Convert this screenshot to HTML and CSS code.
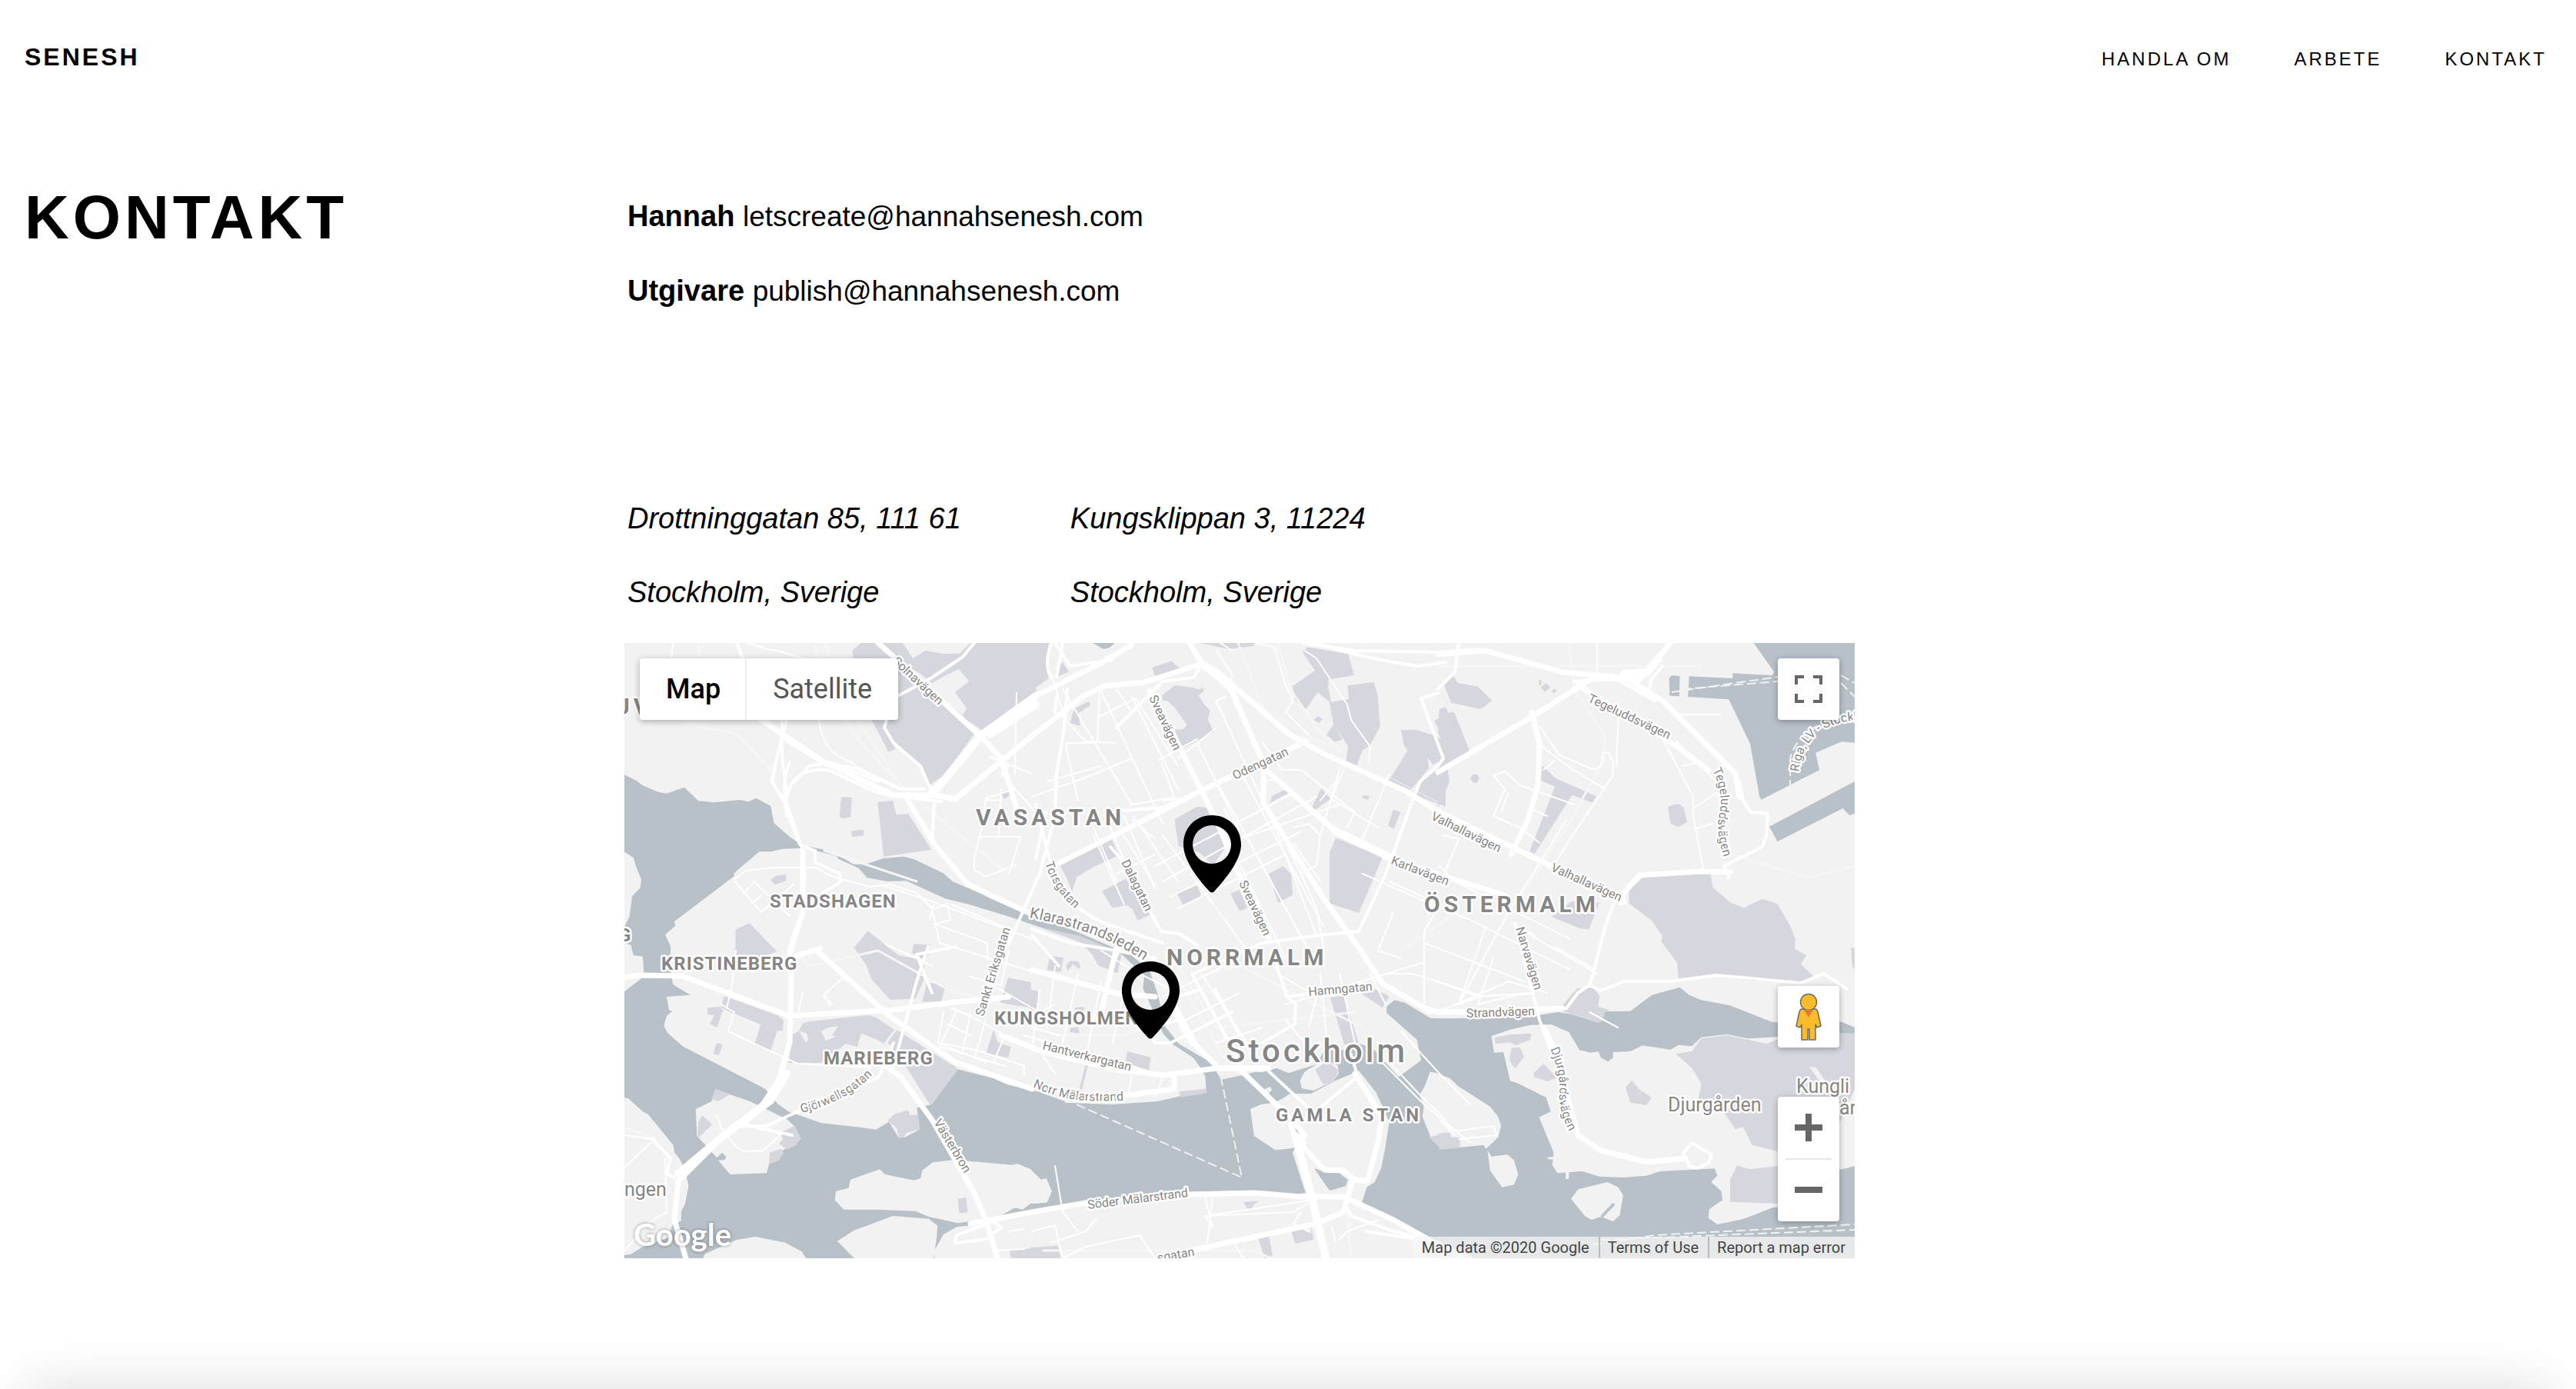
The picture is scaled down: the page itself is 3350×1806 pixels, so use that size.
FILE: index.html
```html
<!DOCTYPE html>
<html lang="sv">
<head>
<meta charset="utf-8">
<meta name="viewport" content="width=device-width, initial-scale=1">
<title>Kontakt – Senesh</title>
<link rel="stylesheet" href="styles.css">
</head>
<body>
<header class="site-header">
  <a class="brand" href="#">SENESH</a>
  <nav class="site-nav" aria-label="Huvudmeny">
    <a href="#">HANDLA OM</a>
    <a href="#">ARBETE</a>
    <a href="#">KONTAKT</a>
  </nav>
</header>

<main class="contact">
  <h1 class="contact-title">KONTAKT</h1>
  <div class="contact-body">
    <div class="emails">
      <p><strong>Hannah</strong> <a href="mailto:letscreate@hannahsenesh.com">letscreate@hannahsenesh.com</a></p>
      <p><strong>Utgivare</strong> <a href="mailto:publish@hannahsenesh.com">publish@hannahsenesh.com</a></p>
    </div>
    <div class="addresses">
      <address>Drottninggatan 85, 111 61<br>Stockholm, Sverige</address>
      <address>Kungsklippan 3, 11224<br>Stockholm, Sverige</address>
    </div>

    <section class="map" aria-label="Karta">
      <svg class="map-canvas" viewBox="0 0 1600 800" preserveAspectRatio="xMidYMid slice">
        <defs>
          <path id="p-torsgatan" d="M547 286Q558 322 588 347L610 360"/>
          <path id="p-klara" d="M526 357Q600 371 645 395T700 433"/>
          <path id="p-norr" d="M531 577Q565 593 600 595T680 592"/>
          <path id="p-gjorwell" d="M230 611Q290 597 328 556"/>
          <path id="p-djurgard" d="M1204 528Q1218 560 1216 585T1234 645"/>
          <path id="p-tegel" d="M1415 165Q1430 195 1424 222T1434 290"/>
          <path id="p-riga" d="M1527 168Q1532 128 1560 112T1640 102"/>
        </defs>
        <rect width="1600" height="800" fill="#f2f2f2"/>

        <g class="water">
          <g transform="matrix(.3444 0 0 .3333 -2 -4)">
            <path d="M0 523 50 548 75 568 135 594 165 599 232 575 285 628 345 634 442 624 475 631 503 617 558 648 571 715 630 768 660 790 690 804 770 820 820 842 870 875 915 876 985 852 1060 845 1100 856 1210 910 1245 942 1340 985 1490 1045 1560 1075 1729 1145 1879 1212 1909 1220 1989 1290 2019 1380 2049 1510 2099 1575 2239 1660 2239 1680 2189 1680 2154 1630 2079 1580 2039 1535 1999 1440 1964 1360 1969 1310 1879 1222 1729 1170 1568 1118 1460 1080 1300 1030 1220 1010 1070 940 1000 942 922 928 890 890 815 855 805 842 690 812 605 815 560 826 515 826 420 910 420 922 195 1098 198 1115 160 1150 180 1195 182 1310 80 1310 75 1235 40 1230 30 1190 0 1180 0 1130 25 1080 35 1000 65 968 70 935 50 885 40 850 0 823Z"/>
          </g>
          <g transform="matrix(.3444 0 0 .3333 -2 396)">
            <path d="M80 100H180L190 145 255 185 165 192 175 245 187 247 165 268 155 305 168 332 225 385 535 550 585 610 625 640 750 685 885 700 955 710 1005 680 1040 740 1065 740 1120 710 1110 625 1165 612 1265 475 1400 510 1450 535 1568 562 1669 600V1240H-10V185L45 140 65 125Z"/>
          </g>
          <g transform="matrix(.3444 0 0 .3333 528 396)">
            <path d="M0 565 130 605 310 612 480 600 565 580 665 565 660 500 645 480H700L720 515 790 500 850 485 875 487 930 470 975 490 1080 455 1110 400 1180 400 1240 375 1290 390 1390 505 1475 440 1460 360 1345 255V230L1375 205 1415 215 1510 275 1600 278V1240H0Z"/>
          </g>
          <g transform="matrix(.3476 0 0 .3333 1058 396)">
            <path d="M0 278 100 275 350 268 450 252 500 260 600 293 615 285 625 250 720 248 800 185 905 155 940 185 985 205 1090 225 1250 290 1310 295 1510 290 1570 316V335L1500 335 1240 350 1160 355 1080 338 985 350 950 385 900 380 870 398 765 382 720 405 655 408V430L635 445 610 430 600 405 570 410 530 400 490 330 425 300 345 302 270 320 200 345 210 410 245 408 270 520 300 530 405 585 422 640 378 662 433 800 428 850 447 880 540 873 605 893 690 897 780 890 830 873 1035 862 1045 890 1022 915 1060 950 1065 985 1015 1020 1012 1055 1045 1080 1140 1060 1190 1040 1250 1015 1400 1000 1490 960V870L1570 850V1240H0Z"/>
          </g>
          <g transform="matrix(.3476 0 0 .3333 1058 -4)">
            <path d="M1173 0 1258 125 1250 138 1103 130V150L940 142 935 222 1088 232 1168 405 1203 612 1210 623 1427 508 1413 440 1510 397 1600 405V0ZM865 150 875 138 905 142 903 220 867 218ZM1240 728 1600 530V660L1540 685 1515 657 1270 787Z"/>
          </g>
          <path d="M609 0H638L631 6 623 8Z"/>
        </g>

        <g class="land">
          <g transform="matrix(.3444 0 0 .3333 -2 396)">
            <path d="M0 585 20 588 75 640 95 650 190 770 195 800 215 825 235 870 248 930 235 1000 220 1030V1065L185 1085 175 1130 70 1170 30 1197 0 1200Z"/>
            <path d="M350 552 335 600 275 630 280 735 312 770 355 820 375 800 390 815 385 828 360 830 405 885 543 880 555 835 605 790 660 760 670 745 650 700 620 670 560 640 480 600 410 575Z"/>
            <path d="M805 950 852 938 860 905 970 865 990 885 1100 908 1125 900 1130 870 1170 838 1250 828 1470 848 1490 843 1540 865 1580 910 1600 905 1620 950 1600 995 1540 998 1510 1022 1480 1015 1420 1050 1265 1075 1155 1050 1105 1028 960 1022H835L800 985Z"/>
            <path d="M1020 1047 1155 1058 1188 1085 1185 1130 1170 1240H900L810 1145 870 1105Z"/>
            <path d="M1180 1240 1175 1185 1210 1120 1260 1090 1365 1078 1470 1045 1560 1028V1240ZM290 1240 310 1195 430 1140 500 1128 610 1150 675 1185 710 1240Z"/>
          </g>
          <g transform="matrix(.3444 0 0 .3333 528 396)">
            <path d="M-10 1032 200 1000 400 965 600 955 820 948 1000 962 1150 945 1250 1000 1370 1060 1480 1120 1660 1200 1700 1240H-10Z"/>
            <path d="M980 570H1060L1150 520 1220 490 1240 480 1305 565 1330 620 1355 680 1340 780 1325 860 1300 915 1270 935 1250 1000 1150 960 1040 960 990 800 1000 780 970 785 925 790 845 735 830 630 870 612 920 605 950 590Z"/>
            <path d="M1080 455 1035 485 1018 520 1025 550 1070 558 1145 520 1165 490 1160 460 1120 440ZM880 555 905 542 912 555 895 575Z"/>
            <path d="M-10 868 15 880 40 905 60 900 80 950 65 990 30 998H-10Z"/>
          </g>
          <g transform="matrix(.3476 0 0 .3333 1058 396)">
            <path d="M-30 485-10 488 45 510 75 540 195 620 225 660 237 695 225 740 180 785 170 770 30 785 11 785-29 735-58 660-53 620-68 575-49 540Z"/>
            <path d="M185 790 200 815 260 808 285 830 300 885 285 925 240 935 195 870 190 830ZM635 915 675 935 693 967 680 1045 655 1068 610 1050 575 1062 550 1048 498 980 525 943ZM410 818 440 815V828L410 825ZM478 870H490V903H478Z"/>
          </g>
        </g>
        <g class="water">
          <path d="M897 683 914 689 929 689 941 698 938 706 925 710 917 712ZM866 622 876 629 881 644 871 634Z"/>
          <path class="slit" d="M1287 729 1271 746"/>
        </g>

        <g class="park">
          <g transform="matrix(.3444 0 0 .3333 -2 -4)">
            <path d="M900 12H1560V200L1355 352 1325 330 1250 280 1205 235 1180 180 1120 130 1030 75 960 12Z"/>
            <path d="M867 40 900 12H960L1030 75 1200 235 1325 355 1325 370 1210 530 1160 565 1130 490 1030 410 990 340 1005 310 1040 300V150L870 75ZM940 312 990 315 985 345 1030 425 1003 437Z"/>
            <path d="M825 613 865 615 860 690 835 697 818 690ZM862 745 908 740 911 763 866 768ZM962 634 1020 627 1032 682 1078 678 1165 818 985 845ZM557 935 580 920 616 915V940L575 955ZM1430 600 1455 585 1470 600 1440 622ZM425 1130 478 1105 582 1215 500 1250 425 1250ZM925 1135 1040 1230 1140 1250 1135 1330 1105 1400 1010 1404 940 1325 920 1270 873 1200 890 1180ZM1098 1185 1160 1190 1155 1225 1140 1250 1092 1220Z"/>
          </g>
          <g transform="matrix(.3444 0 0 .3333 528 -4)">
            <path d="M0 12H80L60 110 70 150 0 200ZM120 85 145 125 95 145ZM460 108 533 82 568 115 475 153ZM498 215 545 178 610 185 640 195 650 183 655 200 635 215 655 250 678 275 670 310 692 358 575 425 545 350 580 348 590 330 545 265 520 240 498 235ZM150 325 165 268 220 240 228 255 182 285 187 335ZM640 12H850L840 25 745 35ZM1045 28 1200 55 1222 138 1125 155V185L1135 242 1203 230 1197 178 1297 165 1312 220 1320 340 1280 415 1255 430 1232 490 1192 472 1200 415 1145 330 1128 240 1085 205 1040 270 1000 235 990 180 1075 120 1027 48ZM1070 312 1085 298 1103 308 1090 325ZM1118 370 1145 330 1178 388 1148 398ZM1400 352 1455 350 1530 375 1570 400 1568 460 1520 487 1500 460 1505 500 1445 575 1425 590 1350 552 1425 432 1410 408ZM1450 605 1480 545 1568 480V650ZM1548 268 1568 262V400L1525 315 1555 300Z"/>
            <path d="M905 635 912 610 965 583 975 597ZM1060 660 1098 580 1135 620 1070 665ZM1255 605 1280 610 1275 625 1252 615ZM1350 725 1370 662 1398 672 1372 738ZM1153 772 1330 848 1240 1065 1130 1028V830ZM108 872 305 775 335 840 240 885 175 925 157 982 140 935ZM270 980 360 932 455 1070 405 1095 385 1050 365 1035 310 1045ZM545 700 630 650 665 655 680 690 740 740 730 820 690 880 640 830 560 805 548 735ZM555 990 630 958 645 1000 578 1038ZM755 990 790 975 820 1045 790 1058ZM900 912 955 882 985 915 990 995 935 1025ZM30 1120 190 1155 345 1225 330 1300 255 1270 235 1230 190 1180Z"/>
          </g>
          <g transform="matrix(.3476 0 0 .3333 1058 -4)">
            <path d="M20 170 55 138 75 168 150 182 202 237 160 270 50 245ZM5 270 30 263 40 285 60 280 108 405 118 435 60 480 35 490 43 555 0 655V430L30 440 0 360ZM378 155 388 158 386 178 378 175ZM385 185 405 168 420 185 400 203ZM425 200 437 190 445 198 432 209ZM120 540 130 525 148 525 155 540 145 558 130 555ZM390 490 440 540 592 610 578 635 502 605 362 833 343 825 438 572 385 548ZM860 650 900 638 920 655 932 710 900 730 870 718ZM425 1080 500 1020 603 1025 565 1130 530 1125ZM715 975 780 915 1020 912 1028 965 1095 1025 1145 1045 1215 1010 1270 1030 1315 1110 1337 1165 1335 1205 1378 1230 1358 1265 1402 1310 1405 1318 1375 1335 1260 1335 1100 1320 1035 1308 900 1325 895 1260 835 1175 840 1155 800 1095 715 1028Z"/>
          </g>
          <g transform="matrix(.3444 0 0 .3333 -2 396)">
            <path d="M423 0H545L580 12 550 27H425ZM383 190 585 265 607 285 603 325 583 325 557 405 497 380 520 300 415 255 370 235ZM320 235 365 230 378 245 355 312 328 298 345 265 320 260ZM342 415 355 372 377 380 362 420ZM705 288 930 263 960 275 1025 320 985 375 950 355 900 335 885 388 840 375 825 390 750 450H625L640 340 665 325 690 370 700 360 695 335 665 325 680 295ZM1148 135 1218 150 1202 210 1130 212ZM1035 322 1255 465 1265 475 1160 615 1085 490 1000 370ZM335 590 350 552 405 572 360 600ZM285 680 300 655 338 690 283 745ZM590 725 650 695 670 740 655 770 620 788 590 765 605 745ZM555 800 595 785 608 800 590 830 552 845ZM1000 675 1025 650 1078 633 1085 655 1115 650 1122 710 1070 722 1063 740 1040 738 1035 705ZM1265 980 1297 975 1302 1033 1270 1036ZM1440 165 1455 118 1540 135 1542 165 1568 170V240L1425 215ZM1400 320 1415 370 1465 388 1455 430 1372 412ZM1460 1180 1568 1172V1240H1470Z"/>
          </g>
          <g transform="matrix(.3444 0 0 .3333 528 396)">
            <path d="M75 32 125 40 115 95 62 88ZM0 165 32 175 15 245 0 240ZM135 70 150 52 180 55 190 75 165 97 140 88ZM168 235 200 232 205 245 168 245ZM150 315 180 310 185 335 150 330ZM365 405 455 428 448 478 360 450ZM185 550 210 450 218 455 195 555ZM562 562 665 550V568L565 585ZM1132 195 1185 188 1240 375 1185 378ZM1250 180 1300 162 1355 190 1330 235ZM1075 478 1120 440 1165 480 1145 520 1105 535ZM805 993 865 988 840 1005 835 1025 820 1020ZM985 1105 1060 1088 1070 1140 1000 1155ZM860 1133 900 1125 915 1200 885 1212ZM0 1170 103 1163 115 1212H0ZM1505 740 1568 722V785L1550 785Z"/>
          </g>
          <g transform="matrix(.3476 0 0 .3333 1058 396)">
            <path d="M450 245 520 160 580 155 605 190 600 230 645 245 625 250 615 285 600 293 520 265ZM212 352 265 340 350 335 345 360 290 382 270 370 215 376ZM275 392 305 388 323 425 288 472 268 440ZM358 490 395 453 445 508 408 522 360 505ZM702 545 725 518 755 555 800 585 780 615 720 605ZM890 415 950 405 985 355 1080 342 1230 375 1300 345 1570 335V530L1500 690 1270 795 1175 770 1142 700 1112 708 1075 650 975 590 985 530 950 470ZM1093 905 1120 850 1165 865 1290 850V1000L1093 992ZM1545 0 1570 5V110L1550 70ZM0 725 45 722 50 740H82V780L5 788Z"/>
          </g>
        </g>

        <g class="land">
          <path d="M362 0H450L436 14 414 14 392 10 375 20ZM418 42 435 34 448 50 430 64 445 85 440 94 415 74 395 55ZM1022 50 1040 46 1045 72 1016 77ZM256 505 265 500 278 498 270 510 275 512 262 517ZM1541 551 1550 552 1562 570 1553 568ZM583 418 592 424 588 432 576 428ZM885 764 888 758H893L893 768Z"/>
        </g>

        <g class="road faint">
          <path d="M247 0 260 60 300 120 360 185 430 245 500 300M262 0 275 60 330 140 362 190M80 105 145 118 195 170M97 0V20M798 0 832 88 870 120 930 135M850 0 866 60 900 110 930 140M1228 0 1235 60 1275 120V150L1225 240 1165 330M1420 195 1440 275 1540 305 1600 290M1060 30 1400 30M700 400 740 470 780 540M720 420 770 500 950 480M620 370 690 415 730 520M230 410 240 420 330 400 420 450 490 470M0 630 40 645M560 510 650 510 700 490M940 740 945 800M545 790H820L840 800M760 430 800 420 960 500M260 270 380 310M1082 350 1010 400"/>
        </g>
        <g class="road thin">
          <path d="M63 0 61 22M160 0 185 8 200 10 231 20M253 100Q258 140 285 150L350 188M142 308 158 296 193 292 250 292 262 300 275 305 320 317 345 314 380 325 400 345 410 390 540 430M168 310 215 355M142 308 178 350 220 314M335 315 400 336 530 385M155 325 166 314M166 338 178 328M405 345 420 338 424 360 402 366M405 366 472 390V412M402 340 398 358M425 340 500 372M475 148 530 170M500 160 490 170 535 220M508 190 470 202 465 240 455 280V295L470 304 510 288M460 252H515L500 300M470 204 490 205M490 190 487 250M510 65 508 170M555 38 573 100 600 128 640 130M546 105 570 95M570 60 660 210 690 205M618 65 615 130H575V140L590 205M615 97 665 72 720 160M660 70 720 190M700 250 810 400M620 63 700 235M640 60 660 90M660 230 690 255M695 152 745 125M745 130 800 245M770 110 720 150M768 76 782 70M770 76 850 250 900 380M698 155 715 200 690 205M530 200 600 175 660 150M550 180 620 160M740 200 700 205M640 235 690 315M662 225 720 310M610 240 640 310"/>
          <path d="M750 185 860 410M770 180 890 400M800 165 910 370M650 225 690 320M630 235 670 330M610 250 650 340M690 290 870 195M700 310 900 200M710 330 880 245M720 345 860 275M640 300 690 275M780 215 800 255 930 210M860 260 880 300 900 345 910 400M870 260 905 310M850 175 835 180M830 130 855 165 880 165 950 220 940 240M930 165 905 250M870 240 890 235 905 250 900 290 880 300M920 203 980 240M905 205 925 180M935 165 915 215M995 170 960 255M885 10 900 20 940 80 945 100 970 135 968 155M845 5 860 55 870 75 860 90 890 120M820 0 845 5M775 0 790 10M770 10 790 40 788 60M960 300 1050 340 1100 360 1230 425M995 310 1060 340 1040 375M1060 290 1080 310M1050 340 1045 355M1000 350 980 400 1010 410M1040 375 1040 470M1120 370 1085 470 1110 460M1085 470 1150 350 1225 230M1058 440 1110 460 1180 455M1040 390 1170 440M1080 310 1230 385M1210 395 1262 425M1185 380 1160 370"/>
          <path d="M1190 108 1215 145 1260 165 1270 160 1273 142 1280 143 1286 155 1285 173 1230 255 1208 290M1191 132 1200 140 1230 162 1275 190M1210 153 1195 165M1130 172 1145 167 1165 185 1235 210M1130 172 1145 190 1130 225 1165 240 1190 260M1150 195 1140 220M1178 215 1200 225M1352 128 1390 200 1390 225 1403 295M1376 160 1395 155M1390 215 1420 195M1392 242 1415 235M1265 0V35M1293 95 1290 160M1365 93H1425M1368 128 1395 155 1420 180M1065 250 1085 255 1062 310M990 430H1025L1115 459 1184 456"/>
          <path d="M133 475 140 445 145 400M126 470 143 480 135 505 225 547 320 552M258 460 270 468M288 432 260 457 268 472M232 455 226 480M340 392 380 410 400 420M480 420 470 440 540 480 560 470M450 434 490 445 500 400M415 480 408 520 470 545M425 475 450 485 495 510 480 545M420 495 450 510M432 478 410 525 495 550M450 482 440 530M470 490 455 540M410 520 460 530 520 550V562M540 450 530 530 700 565M560 420 550 500M590 430 570 520M620 440 600 540M650 450 635 520M545 480 700 490M520 510 620 540 690 560M530 500 565 510M540 530 560 560M660 560 655 590M700 565 690 590M730 490 800 455M750 430 810 520M700 460 780 420M770 520 830 500M850 430 900 460 890 500M860 490 885 520M905 430 915 530M930 430 950 520M990 470 970 430M1010 505 1060 560 1100 600M985 545 1040 600 1100 650M860 470 1040 415M1130 410 1110 470 1170 455M1170 375 1265 430M620 400 660 425 710 450"/>
          <path d="M0 640 36 645 50 660M0 682 34 650M0 790 34 752 55 740 53 670M128 632 145 655 155 661 180 660 203 640 185 630M120 615 128 635M560 680 570 740 590 765M755 720 765 760 755 745 890 725M755 745 870 740 890 728M555 780 600 765 614 748M530 765 560 757 570 800M570 800 600 785 670 770 690 800M765 723 758 780M790 775 805 800M980 750 940 765 930 775M920 760 925 778M880 740 870 755 890 765M1060 620 1080 635 1130 628 1135 640 1085 645M1080 640 1060 620M500 765 520 762M482 790 520 788"/>
          <path d="M1255 480 1292 500M1058 480 1150 440 1200 455"/>
        </g>
        <g class="road mid">
          <path d="M146 0 158 30 190 108 215 130 262 158 300 162 360 190 390 190M211 100 198 150 192 180 213 215 232 270 234 300 232 350 215 410M205 100V150L212 200M215 155Q205 175 210 215L228 262 248 270 248 285 280 300 282 310 258 325M211 225Q205 160 265 165L330 195 395 204 412 206M222 180 240 160 270 155 330 180M455 0 440 18 400 45 350 72 338 110 350 130 385 160 398 190M403 205 400 260M560 0 580 30 620 24 635 22M640 110 700 50 740 45 750 30M576 60 572 110 562 170 560 225 540 300M555 0Q545 30 555 45M570 0 562 45M548 220 535 280M565 420 530 380M560 90 562 70M535 210 555 290Q575 350 640 370L700 390M632 265 645 280 698 375 722 378 745 393M660 390 645 395 630 430M555 290 655 241M648 218 700 214 748 193M900 0Q960 20 1033 30L1068 25M882 0 950 10 1060 12 1110 8M1058 60 1080 38 1085 0M1058 65 1036 72 1065 150 1058 160 1035 180 1025 205 990 300 955 375 905 380 830 390 740 430M1235 50 1290 47 1340 75M1350 30 1335 48 1333 62M1430 290 1480 265 1485 250 1487 222 1465 220 1455 205 1450 180M1430 290 1436 305M1290 330 1275 370 1260 430 1255 445M1255 445 1270 452 1300 440 1360 440 1420 432 1530 442 1560 430 1590 450M1255 445 1240 455 1225 475M1158 365 1190 490 1205 530M848 420 862 460 873 470 872 495 830 520M768 450 800 510M862 460 900 455 970 445M690 500 720 490M738 430 808 560M680 500 690 520 710 520 790 480M718 450 720 460 750 450M904 605 952 565M838 557 890 605M945 535 952 558M498 395 540 300M400 455 380 405 430 395M350 550 380 440 395 395M218 640 180 632 155 625M148 628H185L228 608 330 565 350 520M36 645 60 670 55 690 65 695M430 778 432 770 480 752 490 760 470 775 450 778 430 780M940 735 945 745 1000 765 1060 780M965 765 1030 775 1090 795M1376 665 1388 650 1414 665 1410 676 1395 683 1385 680 1380 668"/>
          <path d="M530 372 580 390 640 400 690 410"/>
          <path class="lane" d="M990 540 1034 587 1068 620"/>
        </g>
        <g class="road wide">
          <path d="M178 100 260 155 350 198 400 198 411 183 465 119 535 69 614 29 659 3M398 197 430 203 535 117 597 69 624 56 676 51 752 27 769 36 865 119 907 143 1017 193 1058 219 1205 290 1300 337M330 0 375 40 470 128 490 150 510 215M366 200 404 263 446 313 480 330 540 357M232 270 232 350 215 400 217 440 215 520 200 570 180 600 130 640 70 700 65 750 80 800M735 0 752 28 775 45 790 63 834 163M831 170 831 208 865 263 910 333 955 396 986 443 1048 479M834 165 924 244 996 279 1058 301 1145 328M566 286 655 241 748 193 886 128M683 63 724 139 769 229 797 296 838 383M0 435 20 432 75 433 215 485 350 477 430 467 500 460M250 400 345 485 430 545 530 580M255 397 215 410M530 425 642 456 690 460M640 396 620 480M490 510 540 530 640 555 700 562 770 553 838 553M716 476 740 520 769 549M802 556 860 612 885 640M640 590 715 580V562M640 590 570 590M340 550 360 565 400 620 455 715 472 755 485 800M450 755 530 740 600 728M730 717 820 715 880 720 940 720M867 626 880 670 893 716 914 800M880 635 883 655 910 685 935 686 950 698 966 700 980 650 985 615 950 560M947 700 935 740 900 755 741 789M940 722 1000 750 1090 800M1040 475 1060 480 1150 478 1220 475M1196 500 1210 530 1240 640 1270 660 1330 675 1380 670M1058 168 1190 90 1260 45 1320 48 1360 0M1058 15 1120 10 1220 38 1300 45 1350 75 1445 170 1450 200M1180 90 1190 130 1188 185 1175 230 1153 275M1240 55 1355 125 1410 165M1296 338 1300 325 1320 302 1400 297 1438 298"/>
        </g>
        <g class="road fat"><path d="M398 197 411 184 465 119 535 69M211 560 190 595 130 640 70 690M1300 40 1330 38 1345 20M872 640 893 716 912 800M475 119 535 80M924 244 996 279M716 476 740 520M755 30 790 58"/></g>
        <g class="median"><path d="M875 129 907 147 1058 224 1200 292M970 162 1058 207"/></g>
        <g class="ferry">
          <path d="M588 600 803 695 776 566M1362 64 1500 44M1375 60 1500 50M1582 42 1600 52M1582 52 1600 70M1516 190V150Q1525 115 1570 100M1260 782 1340 770 1600 756M1270 776 1600 763"/>
        </g>

        <g class="labels road-name">
          <text transform="translate(348 25) rotate(43)">Solnavägen</text>
          <text transform="translate(682 71) rotate(65)">Sveavägen</text>
          <text transform="translate(794 178) rotate(-25)">Odengatan</text>
          <text><textPath href="#p-torsgatan">Torsgatan</textPath></text>
          <text transform="translate(646 285) rotate(64)">Dalagatan</text>
          <text transform="translate(799 312) rotate(65)">Sveavägen</text>
          <text transform="translate(1048 229) rotate(26)">Valhallavägen</text>
          <text transform="translate(1204 296) rotate(24)">Valhallavägen</text>
          <text transform="translate(996 287) rotate(21)">Karlavägen</text>
          <text transform="translate(1159 371) rotate(73)">Narvavägen</text>
          <text transform="translate(1095 487) rotate(-2)">Strandvägen</text>
          <text><textPath href="#p-djurgard">Djurgårdsvägen</textPath></text>
          <text transform="translate(1252 76) rotate(25)">Tegeluddsvägen</text>
          <text><textPath href="#p-tegel">Tegeluddsvägen</textPath></text>
          <text><textPath href="#p-riga">Riga, LV - Stockh</textPath></text>
          <text transform="translate(890 459) rotate(-5)">Hamngatan</text>
          <text transform="translate(543 528) rotate(14)">Hantverkargatan</text>
          <text><textPath href="#p-norr">Norr Mälarstrand</textPath></text>
          <text transform="translate(603 736) rotate(-7)">Söder Mälarstrand</text>
          <text transform="translate(694 805) rotate(-10)">sgatan</text>
          <text transform="translate(467 486) rotate(-73)">Sankt Eriksgatan</text>
          <text><textPath href="#p-gjorwell">Gjörwellsgatan</textPath></text>
          <text transform="translate(402 623) rotate(59)">Västerbron</text>
          <text class="route"><textPath href="#p-klara">Klarastrandsleden</textPath></text>
        </g>
        <g class="labels district">
          <text x="-13" y="93">UV</text>
          <text x="457" y="237">VASASTAN</text>
          <text x="1040" y="350">ÖSTERMALM</text>
          <text x="705" y="419">NORRMALM</text>
        </g>
        <g class="labels quarter">
          <text x="-8" y="388">G</text>
          <text x="189" y="344">STADSHAGEN</text>
          <text x="48" y="425">KRISTINEBERG</text>
          <text x="259" y="548">MARIEBERG</text>
          <text x="481" y="496">KUNGSHOLMEN</text>
          <text class="old-town" x="847" y="622">GAMLA STAN</text>
        </g>
        <g class="labels place">
          <text x="1357" y="609">Djurgården</text>
          <text x="1524" y="585">Kungli</text>
          <text x="1580" y="613">år</text>
          <text x="0" y="719">ngen</text>
        </g>
        <text class="labels city" x="782" y="545">Stockholm</text>

        <g fill="#000" fill-rule="evenodd">
          <path d="M764 224C743 224 727 240 727 262C727 280 741 301 760 322Q764 327 768 322C787 301 802 280 802 262C802 240 785 224 764 224ZM764 237A25 25 0 0 1 764 287A25 25 0 0 1 764 237Z"/>
          <path d="M684 414C663 414 647 430 647 452C647 470 661 491 680 512Q684 517 688 512C707 491 722 470 722 452C722 430 705 414 684 414ZM684 427A25 25 0 0 1 684 477A25 25 0 0 1 684 427Z"/>
        </g>
      </svg>

      <div class="map-types">
        <button type="button" class="map-type is-active">Map</button>
        <button type="button" class="map-type">Satellite</button>
      </div>
      <button type="button" class="map-button fullscreen" aria-label="Toggle fullscreen view">
        <svg width="36" height="36" viewBox="0 0 36 36" fill="none" stroke="#666" stroke-width="4"><path d="M2 12V2H12M24 2H34V12M34 24V34H24M12 34H2V24"/></svg>
      </button>
      <div class="map-side">
        <button type="button" class="map-button" aria-label="Street View">
          <svg width="34" height="62" viewBox="0 0 34 62" fill="#fbbc2c" stroke="#6e6a62" stroke-width="1.5" stroke-linejoin="round"><path d="M8 21H26Q28 21 29 25L33 43 28 45 26 41V61H18V47H16V61H8V41L6 45 1 43 5 25Q6 21 8 21Z"/><circle cx="17" cy="12" r="10.5"/><path d="M11 22H23L17 32Z" fill="#e07f2b" stroke="none"/></svg>
        </button>
        <div class="zoom">
          <button type="button" aria-label="Zoom in"><svg width="36" height="36" viewBox="0 0 36 36" fill="#666"><path d="M14 0H22V14H36V22H22V36H14V22H0V14H14Z"/></svg></button>
          <button type="button" aria-label="Zoom out"><svg width="36" height="36" viewBox="0 0 36 36" fill="#666"><path d="M0 14H36V22H0Z"/></svg></button>
        </div>
      </div>
      <a class="google" href="#">Google</a>
      <div class="attribution">
        <span>Map data ©2020 Google</span>
        <a href="#">Terms of Use</a>
        <a href="#">Report a map error</a>
      </div>
    </section>
  </div>
</main>
<div class="bottom-shade"></div>
</body>
</html>
```
FILE: styles.css
```css
* { box-sizing: border-box; }

body {
  margin: 0;
  min-height: 100vh;
  background: #fff;
  color: #000;
  font-family: "Liberation Sans", Arial, sans-serif;
}

a { color: inherit; text-decoration: none; }

.site-header {
  display: flex;
  justify-content: space-between;
  align-items: baseline;
  padding: 54px 38px 54px 32px;
}

.brand {
  font-size: 32px;
  line-height: 40px;
  font-weight: 700;
  letter-spacing: 3px;
}

.site-nav {
  display: flex;
  gap: 82px;
  font-size: 24px;
  line-height: 40px;
  letter-spacing: 3px;
}

.contact {
  display: grid;
  grid-template-columns: 812fr 1600fr 938fr;
  padding-top: 82px;
}

.contact-title {
  margin: 0;
  padding-left: 32px;
  font-size: 80px;
  line-height: 100px;
  letter-spacing: 5px;
}

.emails, .addresses {
  padding-left: 4px;
  font-size: 38px;
  line-height: 96px;
}

.emails p { margin: 0; }
.emails a { font-size: 37px; }

.addresses {
  display: flex;
  gap: 142px;
  margin-top: 199px;
}

.addresses address { white-space: nowrap; }

.map {
  position: relative;
  height: 800px;
  margin-top: 18px;
  overflow: hidden;
  font-family: Roboto, sans-serif;
}

.map-canvas { display: block; width: 100%; height: 100%; }

.water { fill: #b8c0c8; }
.water .slit { fill: none; stroke: #b8c0c8; stroke-width: 4; }
.land { fill: #f2f2f2; }
.park { fill: #d6d6df; }
.road { fill: none; stroke: #fff; stroke-linejoin: round; stroke-linecap: round; }
.faint { stroke: #f6f6f6; stroke-width: 3; }
.thin { stroke-width: 2; }
.mid { stroke-width: 4; }
.mid .lane { stroke-width: 2; }
.wide { stroke-width: 7; }
.fat { stroke-width: 10; }
.median { fill: none; stroke: #f2f2f2; stroke-width: 1; }
.ferry { fill: none; stroke: #f2f2f2; stroke-width: 2; stroke-dasharray: 12 5; }

.labels {
  fill: #868686;
  stroke: #fff;
  stroke-width: 5px;
  stroke-linejoin: round;
  paint-order: stroke;
}

.road-name { font-size: 16px; }
.road-name .route { font-size: 20px; }
.district { font-size: 30px; font-weight: 700; letter-spacing: 5px; }
.quarter { font-size: 24px; font-weight: 700; letter-spacing: 1px; }
.quarter .old-town { letter-spacing: 4px; }
.place { font-size: 25px; }
.city { font-size: 42px; font-weight: 500; letter-spacing: 4px; }

.map button {
  display: flex;
  align-items: center;
  justify-content: center;
  margin: 0;
  padding: 0;
  border: 0;
  background: #fff;
  font-family: inherit;
}

.map-types {
  position: absolute;
  top: 20px;
  left: 20px;
  display: flex;
  height: 80px;
  border-radius: 4px;
  box-shadow: 0 2px 8px rgba(0, 0, 0, .3);
}

.map .map-type {
  padding: 0 34px;
  border-radius: 0 4px 4px 0;
  font-size: 36px;
  color: #565656;
}

.map .map-type.is-active {
  border-radius: 4px 0 0 4px;
  box-shadow: inset -2px 0 #eee;
  font-weight: 500;
  color: #000;
}

.map .map-button {
  width: 80px;
  height: 80px;
  border-radius: 4px;
  box-shadow: 0 2px 8px rgba(0, 0, 0, .3);
}

.map .fullscreen { position: absolute; top: 20px; right: 20px; }

.map-side {
  position: absolute;
  right: 20px;
  bottom: 48px;
  display: grid;
  gap: 64px;
}

.zoom {
  position: relative;
  border-radius: 4px;
  background: #fff;
  box-shadow: 0 2px 8px rgba(0, 0, 0, .3);
}

.map .zoom button { width: 80px; height: 80px; background: none; }
.map .zoom button + button { height: 82px; }
.zoom::after {
  content: "";
  position: absolute;
  top: 80px;
  left: 10px;
  right: 10px;
  height: 2px;
  background: #e6e6e6;
}

.google {
  position: absolute;
  left: 12px;
  bottom: 7px;
  font-family: Lato, sans-serif;
  font-size: 40px;
  line-height: 48px;
  font-weight: 700;
  color: #fff;
  text-shadow: 0 0 4px rgba(0, 0, 0, .4);
}

.attribution {
  position: absolute;
  right: 0;
  bottom: 0;
  display: flex;
  height: 28px;
  background: rgba(245, 245, 245, .75);
  font-size: 20px;
  line-height: 28px;
  color: #444;
}

.attribution > * { padding: 0 12px; white-space: nowrap; }
.attribution a { border-left: 2px solid #b8bcc0; padding: 0 12px 0 10px; }

.bottom-shade {
  position: fixed;
  bottom: -200px;
  left: 36px;
  right: 36px;
  height: 200px;
  box-shadow: 0 0 70px rgba(0, 0, 0, .15);
  pointer-events: none;
}
```
